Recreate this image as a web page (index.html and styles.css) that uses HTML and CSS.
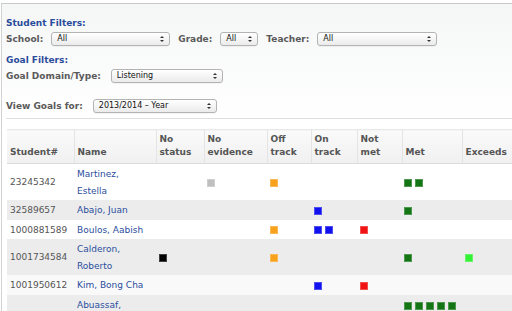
FILE: index.html
```html
<!DOCTYPE html>
<html lang="en">
<head>
    <meta charset="UTF-8">
    <title>Student Goals</title>
    <link rel="stylesheet" href="styles.css">
</head>
<body>
    <div class="page">
        <div class="filters">
            <h2 class="section-title first">Student Filters:</h2>
            <div class="filter-row">
                <label>School:</label>
                <span class="select school">All</span>
                <label>Grade:</label>
                <span class="select grade">All</span>
                <label>Teacher:</label>
                <span class="select teacher">All</span>
            </div>

            <h2 class="section-title">Goal Filters:</h2>
            <div class="filter-row">
                <label class="wide">Goal Domain/Type:</label>
                <span class="select domain">Listening</span>
            </div>

            <div class="filter-row period">
                <label class="wide">View Goals for:</label>
                <span class="select year">2013/2014 &ndash; Year</span>
            </div>
        </div>

        <table class="goals">
            <colgroup>
                <col style="width: 67px">
                <col style="width: 82px">
                <col style="width: 48px">
                <col style="width: 63px">
                <col style="width: 44px">
                <col style="width: 46px">
                <col style="width: 45px">
                <col style="width: 60px">
                <col style="width: 60px">
            </colgroup>
            <thead>
                <tr>
                    <th>Student#</th>
                    <th>Name</th>
                    <th>No<br>status</th>
                    <th>No<br>evidence</th>
                    <th>Off<br>track</th>
                    <th>On<br>track</th>
                    <th>Not<br>met</th>
                    <th>Met</th>
                    <th>Exceeds</th>
                </tr>
            </thead>
            <tbody>
                <tr>
                    <td>23245342</td>
                    <td><a href="#">Martinez,<br>Estella</a></td>
                    <td></td>
                    <td><i class="sq none"></i></td>
                    <td><i class="sq off"></i></td>
                    <td></td>
                    <td></td>
                    <td><i class="sq met"></i><i class="sq met"></i></td>
                    <td></td>
                </tr>
                <tr>
                    <td>32589657</td>
                    <td><a href="#">Abajo, Juan</a></td>
                    <td></td>
                    <td></td>
                    <td></td>
                    <td><i class="sq on"></i></td>
                    <td></td>
                    <td><i class="sq met"></i></td>
                    <td></td>
                </tr>
                <tr>
                    <td>1000881589</td>
                    <td><a href="#">Boulos, Aabish</a></td>
                    <td></td>
                    <td></td>
                    <td><i class="sq off"></i></td>
                    <td><i class="sq on"></i><i class="sq on"></i></td>
                    <td><i class="sq notmet"></i></td>
                    <td></td>
                    <td></td>
                </tr>
                <tr>
                    <td>1001734584</td>
                    <td><a href="#">Calderon,<br>Roberto</a></td>
                    <td><i class="sq nostatus"></i></td>
                    <td></td>
                    <td><i class="sq off"></i></td>
                    <td></td>
                    <td></td>
                    <td><i class="sq met"></i></td>
                    <td><i class="sq exceeds"></i></td>
                </tr>
                <tr class="light">
                    <td>1001950612</td>
                    <td><a href="#">Kim, Bong Cha</a></td>
                    <td></td>
                    <td></td>
                    <td></td>
                    <td><i class="sq on"></i></td>
                    <td><i class="sq notmet"></i></td>
                    <td></td>
                    <td></td>
                </tr>
                <tr class="top">
                    <td class="mid">1002233871</td>
                    <td><a href="#">Abuassaf,<br>Nadia</a></td>
                    <td></td>
                    <td></td>
                    <td></td>
                    <td></td>
                    <td></td>
                    <td><i class="sq met"></i><i class="sq met"></i><i class="sq met"></i><i class="sq met"></i><i class="sq met"></i><i class="sq met"></i><i class="sq met"></i><i class="sq met"></i><i class="sq met"></i><i class="sq met"></i><i class="sq met"></i><i class="sq met"></i></td>
                    <td></td>
                </tr>
            </tbody>
        </table>
    </div>
</body>
</html>
```

FILE: styles.css
```css
html, body {
    margin: 0;
    padding: 0;
    height: 100%;
    overflow: hidden;
}

body {
    font-family: "DejaVu Sans", Verdana, sans-serif;
    font-size: 9px;
    color: #555;
    background-color: #fff;
}

.page {
    margin: 3px 0 0 1px;
    border-top: 1px solid #c9c9c9;
    border-left: 1px solid #d2d2d2;
    height: 100%;
    overflow: hidden;
    background: linear-gradient(#f5f6f6, #fff 116px);
}

.filters {
    margin-left: 4px;
    padding-top: 13px;
    padding-bottom: 4px;
    border-bottom: 1px solid #dedede;
}

.section-title {
    margin: 7px 0 0 0;
    font-size: 9px;
    line-height: 13px;
    font-weight: bold;
    color: #2a4c9b;
}

.section-title.first {
    margin-top: 0;
}

.filter-row {
    display: flex;
    align-items: center;
    height: 16px;
    margin-top: 1px;
}

.filter-row.period {
    margin-top: 14px;
}

label {
    font-weight: bold;
    color: #5a5a5a;
    margin-right: 8px;
}

label.wide {
    margin-right: 10px;
}

.select {
    position: relative;
    box-sizing: border-box;
    height: 14px;
    line-height: 12px;
    padding-left: 5px;
    margin-right: 8px;
    font-size: 8px;
    color: #111;
    border: 1px solid #b3b3b3;
    border-radius: 3px;
    background: linear-gradient(#fff, #ebebeb);
    box-shadow: 0 1px 0 rgba(0, 0, 0, 0.04);
}

/* up / down arrows of the select */
.select::before,
.select::after {
    content: "";
    position: absolute;
    right: 5px;
    width: 0;
    height: 0;
    border-left: 2px solid transparent;
    border-right: 2px solid transparent;
}

.select::before {
    top: 3px;
    border-bottom: 2px solid #333;
}

.select::after {
    top: 7px;
    border-top: 2px solid #333;
}

.school { width: 119px; }
.grade { width: 38px; }
.teacher { width: 120px; }
.domain { width: 112px; }
.year { width: 124px; }

.goals {
    margin: 10px 0 0 5px;
    border-collapse: collapse;
    table-layout: fixed;
    width: 515px;
}

.goals th {
    text-align: left;
    vertical-align: bottom;
    font-weight: bold;
    color: #555;
    line-height: 13px;
    padding: 3px 3px 4px 3px;
    height: 24px;
    border-top: 1px solid #e8e8e8;
    border-left: 1px solid #e4e4e4;
    border-bottom: 1px solid #dcdcdc;
    background: linear-gradient(#fafafa, #f0f0f0);
}

.goals th:first-child {
    border-left: none;
}

.goals td {
    padding: 2px 3px 1px 3px;
    line-height: 16.5px;
    vertical-align: middle;
    color: #555;
}

.goals tbody tr:nth-child(even) td {
    background-color: #ececec;
}

.goals tr.light td {
    background-color: #f9f9f9;
}

.goals tr.top td {
    vertical-align: top;
}

.goals tr.top td.mid {
    vertical-align: middle;
}

.goals td:nth-child(8) {
    padding: 2px 0 1px 2px;
}

.goals a {
    color: #2b4e9e;
    text-decoration: none;
}

.sq {
    display: inline-block;
    width: 8px;
    height: 8px;
    margin-right: 3px;
    vertical-align: middle;
    box-sizing: border-box;
    border: 1px solid rgba(255, 255, 255, 0.25);
}

.top .sq {
    margin-top: 5px;
    vertical-align: top;
}

.none { background-color: #bfbfbf; }
.nostatus { background-color: #000; }
.off { background-color: #f8a11c; }
.on { background-color: #1212ee; }
.notmet { background-color: #f01313; }
.met { background-color: #137513; }
.exceeds { background-color: #33f233; }
```
